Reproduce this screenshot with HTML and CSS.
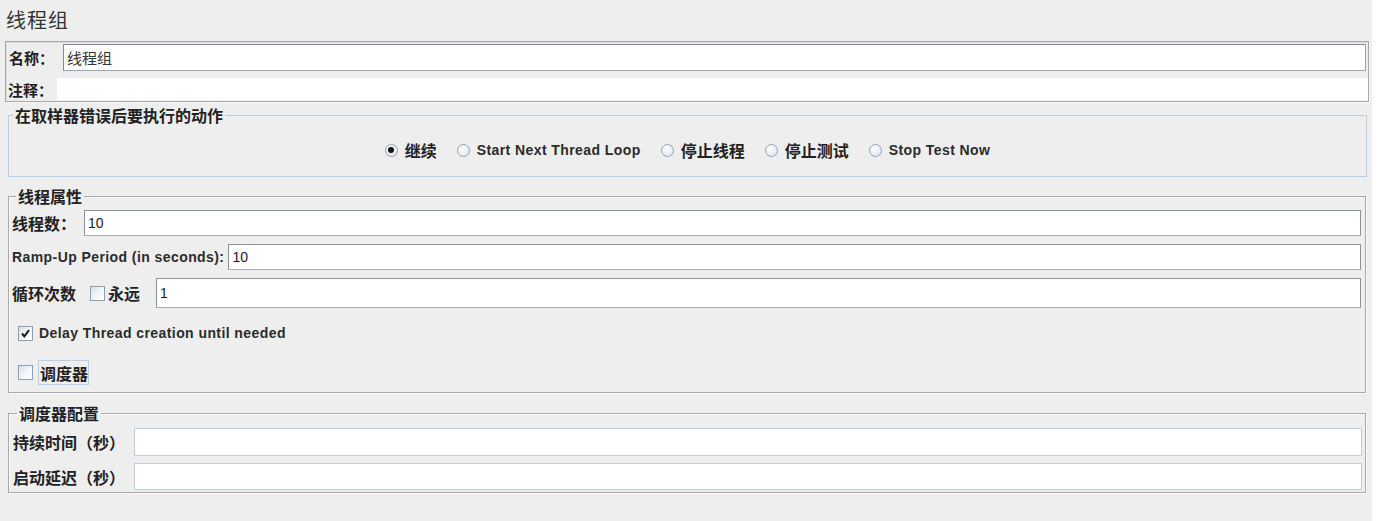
FILE: index.html
```html
<!DOCTYPE html>
<html lang="zh">
<head>
<meta charset="utf-8">
<title>线程组</title>
<link rel="stylesheet" href="styles.css">
</head>
<body>
<div class="page">
  <div class="title">线程组</div>

  <div class="namebox">
    <div class="name-row">
      <span class="lbl zh15">名称：</span>
      <div class="field name-field">线程组</div>
    </div>
    <div class="comment-row">
      <span class="lbl zh15">注释：</span>
      <div class="comment-field"></div>
    </div>
  </div>

  <fieldset class="group group-blue">
    <legend class="zh">在取样器错误后要执行的动作</legend>
    <div class="radios">
      <span class="radio-item"><span class="radio checked"></span><span class="zh">继续</span></span>
      <span class="radio-item"><span class="radio"></span><span class="en">Start Next Thread Loop</span></span>
      <span class="radio-item"><span class="radio"></span><span class="zh">停止线程</span></span>
      <span class="radio-item"><span class="radio"></span><span class="zh">停止测试</span></span>
      <span class="radio-item"><span class="radio"></span><span class="en">Stop Test Now</span></span>
    </div>
  </fieldset>

  <fieldset class="group group-gray props">
    <legend class="zh">线程属性</legend>
    <div class="row r1">
      <span class="zh">线程数：</span>
      <div class="field input-gray">10</div>
    </div>
    <div class="row r2">
      <span class="en">Ramp-Up Period (in seconds):</span>
      <div class="field input-gray">10</div>
    </div>
    <div class="row r3">
      <span class="zh">循环次数</span>
      <span class="check"></span>
      <span class="zh forever">永远</span>
      <div class="field input-gray">1</div>
    </div>
    <div class="row r4">
      <span class="check checked">
        <svg width="11" height="11" viewBox="0 0 11 11"><path d="M2 5.5 L4.3 8.3 L9 2.2" fill="none" stroke="#1a1a1a" stroke-width="2"/></svg>
      </span>
      <span class="en">Delay Thread creation until needed</span>
    </div>
    <div class="row r5">
      <span class="check"></span>
      <span class="zh focus">调度器</span>
    </div>
  </fieldset>

  <fieldset class="group group-gray sched">
    <legend class="zh">调度器配置</legend>
    <div class="row s1">
      <span class="zh">持续时间（秒）</span>
      <div class="field input-blue"></div>
    </div>
    <div class="row s2">
      <span class="zh">启动延迟（秒）</span>
      <div class="field input-blue"></div>
    </div>
  </fieldset>
</div>
</body>
</html>
```

FILE: styles.css
```css
html, body {
  margin: 0;
  padding: 0;
  background: #ffffff;
}
body {
  font-family: "Liberation Sans", "Noto Sans CJK SC", sans-serif;
  color: #222;
}
.page {
  width: 1372px;
  height: 521px;
  background: #eeeeee;
  overflow: hidden;
}
.title {
  height: 41px;
  line-height: 40px;
  padding-left: 6px;
  font-family: "Noto Sans CJK SC", sans-serif;
  font-size: 20px;
  letter-spacing: 1px;
  color: #333;
}
.zh {
  font-family: "Noto Sans CJK SC", sans-serif;
  font-size: 16px;
  font-weight: 700;
  color: #222;
}
.zh15 {
  font-family: "Noto Sans CJK SC", sans-serif;
  font-size: 15px;
  font-weight: 700;
  color: #222;
}
.en {
  font-family: "Liberation Sans", sans-serif;
  font-size: 14px;
  font-weight: 700;
  letter-spacing: 0.42px;
  color: #2b2b2b;
}

/* name / comment box */
.namebox {
  margin-left: 5px;
  width: 1364px;
  height: 61px;
  box-sizing: border-box;
  border: 1px solid #a8a8a8;
  box-shadow: inset 1px 1px 0 #dcdcdc, 1px 1px 0 #f8f8f8;
  display: flex;
  flex-direction: column;
}
.name-row {
  display: flex;
  align-items: center;
  margin-top: 2px;
  height: 27px;
}
.name-row .lbl {
  width: 57px;
  padding-left: 3px;
  box-sizing: border-box;
}
.field {
  background: #fff;
  box-sizing: border-box;
  font-family: "Liberation Sans", "Noto Sans CJK SC", sans-serif;
  font-size: 14px;
  padding-left: 3px;
  display: flex;
  align-items: center;
  color: #222;
}
.name-field {
  flex: 1;
  height: 27px;
  margin-right: 2px;
  border: 1px solid #9aa6b3;
  border-top-color: #7f8b99;
  border-left-color: #7f8b99;
  font-family: "Noto Sans CJK SC", sans-serif;
  font-size: 15px;
  color: #333;
}
.comment-row {
  display: flex;
  align-items: center;
  margin-top: 7px;
  height: 22px;
}
.comment-row .lbl {
  width: 51px;
  padding-left: 2px;
  box-sizing: border-box;
}
.comment-field {
  flex: 1;
  height: 22px;
  background: #fff;
}

/* groups */
.group {
  margin: 0;
  padding: 0;
  min-width: 0;
  box-sizing: border-box;
}
.group legend {
  margin-left: 4px;
  padding: 0 2px;
  line-height: 18px;
  height: 18px;
}
.group-blue {
  margin: 4px 5px 0 8px;
  width: 1359px;
  border: 1px solid #b8cfe5;
  padding: 16px 0 16px 0;
}
.group-gray {
  margin-left: 8px;
  width: 1358px;
  border: 1px solid #a9a9a9;
  box-shadow: 1px 1px 0 #fafafa, inset 1px 1px 0 #fafafa;
}

/* radios */
.radios {
  display: flex;
  justify-content: center;
  align-items: center;
  height: 20px;
  gap: 20px;
}
.radio-item {
  display: flex;
  align-items: center;
  gap: 7px;
}
.radio {
  width: 13px;
  height: 13px;
  box-sizing: border-box;
  border-radius: 50%;
  border: 1px solid #8fa3b8;
  background: radial-gradient(circle at 40% 35%, #ffffff 0%, #e8eef4 60%, #cfdbe7 100%);
  display: inline-flex;
  align-items: center;
  justify-content: center;
}
.radio.checked::after {
  content: "";
  width: 6px;
  height: 6px;
  border-radius: 50%;
  background: #111;
}

/* thread properties */
.props {
  margin-top: 10px;
  padding: 5px 4px 7px 3px;
}
.row {
  display: flex;
  align-items: center;
}
.row .field {
  flex: 1;
}
.r1 { height: 26px; }
.r1 .field { margin-left: 8px; height: 26px; }
.r2 { height: 26px; margin-top: 8px; }
.r2 .field { margin-left: 4px; height: 26px; }
.r3 { height: 30px; margin-top: 8px; }
.r3 .check { margin-left: 14px; }
.r3 .forever { margin-left: 3px; }
.r3 .field { margin-left: 16px; height: 30px; }
.input-gray {
  border: 1px solid #a3adb8;
  border-top-color: #8693a1;
  border-left-color: #8693a1;
  border-right-color: #8693a1;
}
.check {
  width: 15px;
  height: 15px;
  box-sizing: border-box;
  border: 1px solid #8da0b3;
  background: linear-gradient(135deg, #d6e1ec 0%, #f2f6fa 55%, #ffffff 100%);
  display: inline-flex;
  align-items: center;
  justify-content: center;
  flex: none;
}
.r4 { height: 26px; margin-top: 12px; padding-left: 6px; }
.r4 .en { margin-left: 6px; }
.r5 { height: 25px; margin-top: 14px; padding-left: 6px; }
.focus {
  margin-left: 5px;
  height: 25px;
  width: 51px;
  box-sizing: border-box;
  border: 1px solid #b8cfe5;
  display: flex;
  align-items: center;
  padding-left: 1px;
}

/* scheduler */
.sched {
  margin-top: 11px;
  padding: 6px 3px 2px 4px;
}
.s1 { height: 28px; }
.s2 { height: 27px; margin-top: 7px; }
.s1 .field, .s2 .field { margin-left: 9px; height: 100%; }
.input-blue {
  border: 1px solid #b8cfe5;
}
```
